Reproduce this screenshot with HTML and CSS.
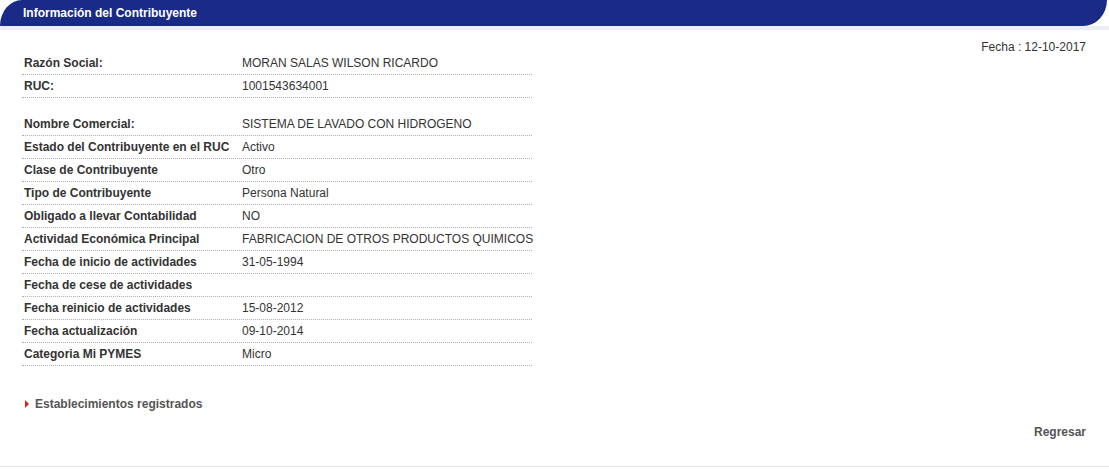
FILE: index.html
```html
<!DOCTYPE html>
<html lang="es">
<head>
<meta charset="utf-8">
<title>Información del Contribuyente</title>
<link rel="stylesheet" href="styles.css">
</head>
<body>
<div class="page">
  <div class="header"><span class="header-title">Información del Contribuyente</span></div>
  <div class="content">
    <div class="fecha">Fecha : 12-10-2017</div>
    <div class="info">
      <div class="row"><div class="lbl">Razón Social:</div><div class="val">MORAN SALAS WILSON RICARDO</div></div>
      <div class="row"><div class="lbl">RUC:</div><div class="val">1001543634001</div></div>
      <div class="row spaced"><div class="lbl">Nombre Comercial:</div><div class="val">SISTEMA DE LAVADO CON HIDROGENO</div></div>
      <div class="row"><div class="lbl">Estado del Contribuyente en el RUC</div><div class="val">Activo</div></div>
      <div class="row"><div class="lbl">Clase de Contribuyente</div><div class="val">Otro</div></div>
      <div class="row"><div class="lbl">Tipo de Contribuyente</div><div class="val">Persona Natural</div></div>
      <div class="row"><div class="lbl">Obligado a llevar Contabilidad</div><div class="val">NO</div></div>
      <div class="row"><div class="lbl">Actividad Económica Principal</div><div class="val">FABRICACION DE OTROS PRODUCTOS QUIMICOS</div></div>
      <div class="row"><div class="lbl">Fecha de inicio de actividades</div><div class="val">31-05-1994</div></div>
      <div class="row"><div class="lbl">Fecha de cese de actividades</div><div class="val"></div></div>
      <div class="row"><div class="lbl">Fecha reinicio de actividades</div><div class="val">15-08-2012</div></div>
      <div class="row"><div class="lbl">Fecha actualización</div><div class="val">09-10-2014</div></div>
      <div class="row"><div class="lbl">Categoria Mi PYMES</div><div class="val">Micro</div></div>
    </div>
    <div class="estab"><span class="arrow"></span>Establecimientos registrados</div>
    <div class="actions"><a class="regresar" href="#">Regresar</a></div>
  </div>
</div>
</body>
</html>
```

FILE: styles.css
```css
html, body {
  margin: 0;
  padding: 0;
  background: #fff;
}
body {
  font-family: "Liberation Sans", Arial, sans-serif;
  font-size: 12px;
  color: #333;
}
.page {
  width: 1109px;
  height: 466px;
  border-bottom: 1px solid #e6e6e6;
}
.header {
  height: 26px;
  background: #1a2a87;
  border-top-left-radius: 22px 26px;
  border-bottom-right-radius: 24px 26px;
  margin-right: 2px;
  display: flex;
  align-items: center;
}
.header-title {
  color: #fff;
  font-weight: bold;
  font-size: 12px;
  padding-left: 23px;
}
.content {
  border-top: 4px solid #eceef3;
  padding: 10px 23px 0 22px;
  display: flex;
  flex-direction: column;
}
.fecha {
  align-self: flex-end;
  line-height: 14px;
  height: 14px;
  color: #333;
}
.info {
  width: 510px;
  margin-top: -2px;
  display: flex;
  flex-direction: column;
}
.row {
  display: flex;
  height: 22px;
  align-items: center;
  border-bottom: 1px dotted #b0b0b0;
}
.row.spaced {
  margin-top: 15px;
}
.lbl {
  flex: 0 0 218px;
  padding-left: 2px;
  font-weight: bold;
  color: #333;
  white-space: nowrap;
}
.val {
  flex: 0 0 auto;
  color: #333;
  white-space: nowrap;
}
.estab {
  margin-top: 31px;
  display: flex;
  align-items: center;
  font-weight: bold;
  color: #555;
  line-height: 14px;
}
.arrow {
  width: 0;
  height: 0;
  border-top: 4px solid transparent;
  border-bottom: 4px solid transparent;
  border-left: 4px solid #d42020;
  margin-left: 3px;
  margin-right: 6px;
}
.actions {
  display: flex;
  justify-content: flex-end;
  margin-top: 14px;
}
.regresar {
  font-weight: bold;
  color: #555;
  text-decoration: none;
  line-height: 14px;
}
```
